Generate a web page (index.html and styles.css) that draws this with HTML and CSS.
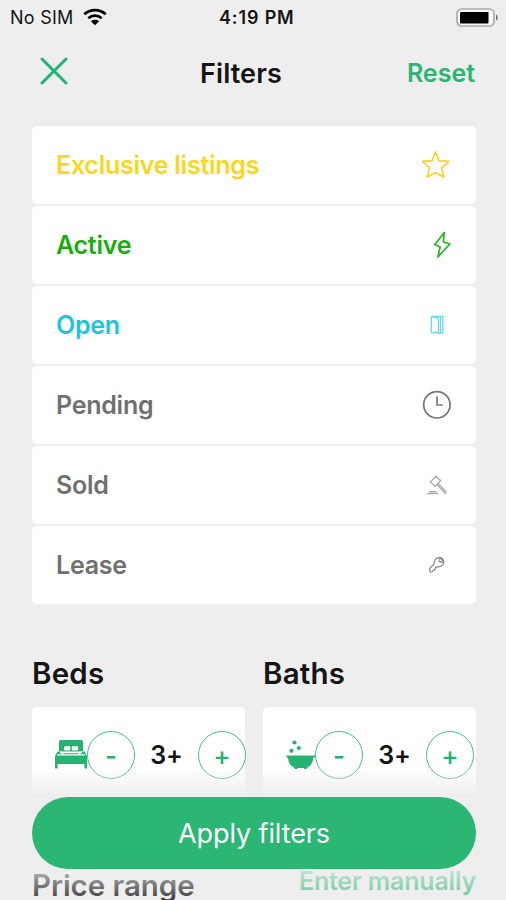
FILE: index.html
```html
<!DOCTYPE html>
<html lang="en">
<head>
<meta charset="utf-8">
<title>Filters</title>
<link rel="stylesheet" href="styles.css">
</head>
<body>
<div class="screen">
  <div class="status">
    <div class="carrier"><span class="sim">No SIM</span>
      <svg width="24" height="18" viewBox="0 0 24 18" fill="none" stroke="#000" stroke-width="2.7"><path d="M1.3 6.3C7.2.6 16.8.6 22.7 6.3M5.3 10.3c3.8-3.5 9.600-3.500 13.400 0"/><path d="M12 17.200 7.900 13.300c2.300-2 5.900-2 8.200 0z" fill="#000" stroke="none"/></svg>
    </div>
    <span class="time">4:19 PM</span>
    <svg class="battery" width="43" height="19" viewBox="0 0 43 19"><rect x="1" y="1" width="37" height="17" rx="4.500" fill="#f8f8f8" stroke="#aaa" stroke-width="1.700"/><rect x="4" y="4" width="28.500" height="11.500" rx="1"/><path d="M40 6.500c2.400 1 2.400 5 0 6z" fill="#777"/></svg>
  </div>
  <header class="header">
    <svg class="close" width="28" height="28" viewBox="0 0 28 28" fill="none" stroke="#1db374" stroke-width="3" stroke-linecap="round"><path d="m2 2 24 24M26 2 2 26"/></svg>
    <h1 class="title"><span>Filters</span></h1>
    <span class="reset">Reset</span>
  </header>
  <main class="content">
    <div class="list">
      <div class="row exclusive"><span class="t-exclusive">Exclusive listings</span>
        <svg width="30" height="30" viewBox="0 0 30 30"><path d="m14.500 2 3.600 8.700 9.900.7-7.400 6.500 2.200 9.400-8.300-4.900-8.400 4.900 2.300-9.400L1.500 11.400l9.500-.7z"/></svg></div>
      <div class="row active"><span class="t-active">Active</span>
        <svg width="30" height="30" viewBox="0 0 30 30"><path d="M23.200 2.500 13.800 14.600l5.300 2.500-2.200 9.900L28.800 14l-6.400-2z"/></svg></div>
      <div class="row open"><span class="t-open">Open</span>
        <svg width="30" height="30" viewBox="0 0 30 30"><path d="M10.300 6.500h11.500v16.200M10.300 6.500v16h7.200M10.300 6.500l7.200 2.200v14.800l4.500-1M19.500 7v16"/></svg></div>
      <div class="row"><span class="t-pending">Pending</span>
        <svg width="30" height="30" viewBox="0 0 30 30"><circle cx="15.900" cy="14.800" r="13.200"/><path d="M16 6.500v8.500h5.800"/></svg></div>
      <div class="row sold"><span class="t-sold">Sold</span>
        <svg width="30" height="30" viewBox="0 0 30 30"><path d="m15 6.200-5.500 5.700 4.500 4.300 5.600-5.700zM14 5.500l6.300 5.900M8.800 11.200l6 5.700M17.400 13.800l8.200 8.500M16.200 15l8.200 8.500 1.200-1.200M6.500 23.500h11M8.200 21.700h7.200"/></svg></div>
      <div class="row lease"><span class="t-lease">Lease</span>
        <svg width="30" height="30" viewBox="0 0 30 30"><path d="M14 9.800c1.600-2.400 4.700-2.900 6.800-1.600 2.100 1.400 2.600 4.200 1.200 6.300-1.200 1.800-3.200 2.500-5.100 2.200l-2.300 1-.5 1.900-1.900.5c-.3 1.500-1.400 2.300-2.600 1.800-1.200-.6-1.300-2.800-.4-3.900l4-4.200c-.2-1.400 0-2.800.8-4zM17.800 8.300l.5 3.200 3.800.8M19.200 8.200l3.100 2.800"/></svg></div>
    </div>
    <div class="counters">
      <section class="group">
        <h2 class="t-beds"><span>Beds</span></h2>
        <div class="card">
          <svg class="bed" width="32" height="30" viewBox="0 0 32 30" fill="#26b371"><path d="M5.500 0h21Q28 0 28 1.500V11.500H4V1.500Q4 0 5.500 0z"/><path d="M2.500 11.500h3L7.500 13.300h17l2-1.800h3L32 16v12.500h-2.600V24H2.600v4.500H0V16z"/><path d="M2.200 14.900h27.600M5 11.500l3.200 2.800M27 11.500l-3.200 2.800" stroke="#fff" stroke-width="1.400"/><rect x="9" y="6.300" width="6.300" height="4.300" rx="1" fill="#fff"/><rect x="16.800" y="6.300" width="6.300" height="4.300" rx="1" fill="#fff"/></svg>
          <button class="step">-</button><span class="value">3+</span><button class="step">+</button>
        </div>
      </section>
      <section class="group">
        <h2 class="t-baths"><span>Baths</span></h2>
        <div class="card baths">
          <svg class="bath" width="29" height="30" viewBox="0 0 29 30" fill="#26b371"><circle cx="8.500" cy="2.500" r="2.100"/><circle cx="12.800" cy="8" r="2.100"/><circle cx="5.500" cy="10.800" r="2.100"/><path d="M.5 15.500H29v2h-1.500c-.7 5-2.600 8.500-5.500 9.500l-1.500 2h-2l-1-1h-5.500l-1 1H9l-1.500-2c-3.500-1-5-4.500-5.500-9.500H.5z"/></svg>
          <button class="step">-</button><span class="value">3+</span><button class="step">+</button>
        </div>
      </section>
    </div>
    <div class="price"><h2 class="t-price"><span>Price range</span></h2><span class="manual">Enter manually</span></div>
  </main>
  <div class="footer"><button class="apply"><span>Apply filters</span></button></div>
</div>
</body>
</html>
```
FILE: styles.css
```css
* { box-sizing: border-box; }
body { margin: 0; background: #eee; font-family: Inter, "Liberation Sans", sans-serif; font-feature-settings: "calt" 0; color: #151515; }
h1, h2 { margin: 0; }
button { font-family: inherit; font-feature-settings: inherit; padding: 0; }
.screen { position: relative; width: 506px; height: 900px; overflow: hidden; }
.status { display: grid; grid-template-columns: 209px auto 1fr; align-items: center; height: 34px; padding: 0 7px 0 10px; font-size: 18px; }
.carrier { display: flex; align-items: center; gap: 9px; }
.sim { letter-spacing: .25px; }
.time { font-weight: 600; letter-spacing: .85px; }
.battery { justify-self: end; }
.header { display: grid; grid-template-columns: 160px auto 1fr; align-items: center; height: 78px; padding: 0 31px 0 40px; }
.close { margin-top: -4px; }
.title { padding-top: 2px; font-size: 27px; font-weight: 600; line-height: 40px; letter-spacing: .1px; }
.reset { justify-self: end; font-size: 25px; font-weight: 600; color: #2bb673; }
.content { padding: 14px 30px 0 32px; }
.list { display: flex; flex-direction: column; gap: 2px; }
.row { display: flex; align-items: center; justify-content: space-between; height: 78px; padding: 0 25px 0 24px; background: #fff; border-radius: 5px; font-size: 25px; font-weight: 600; letter-spacing: -.25px; color: #707070; }
.row svg { fill: none; stroke: #777; stroke-width: 1.7; stroke-linejoin: round; }
.exclusive { color: #f9d71c; }
.exclusive svg { stroke: #f5d52b; }
.active { color: #17ad0c; }
.active svg { stroke: #27b427; }
.open { color: #1bc5df; }
.open svg { stroke: #68d7e8; stroke-width: 1.3; }
.sold svg { stroke: #aaa; stroke-width: 1.3; }
.lease svg { stroke: #8c8c8c; stroke-width: 1.3; }
.counters { display: grid; grid-template-columns: 213px 213px; gap: 18px; margin-top: 49px; }
.group h2, .price h2 { font-size: 29.500px; font-weight: 600; line-height: 40px; letter-spacing: .2px; }
.price h2 { letter-spacing: -.05px; }
.card { display: flex; align-items: center; height: 95px; margin-top: 14px; padding-left: 23px; background: #fff; border-radius: 5px; }
.card svg { flex: none; }
.step { flex: none; width: 48px; height: 48px; border: 1.5px solid #4abc8b; border-radius: 50%; background: transparent; color: #26b371; font-size: 26px; font-weight: 500; line-height: 48px; }
.value { flex: none; width: 63px; text-align: center; font-size: 25px; font-weight: 600; }
.price { display: flex; justify-content: space-between; align-items: flex-start; height: 40px; margin-top: 63px; }
.manual { font-size: 25px; font-weight: 600; line-height: 33px; letter-spacing: -.2px; color: #2bb673; opacity: .85; }
.footer { position: absolute; left: 0; right: 0; bottom: 0; height: 136px; padding: 33px 30px 0 32px; background: linear-gradient(#eee0 4px, #eee 32px, #eee 92px, #eeeeee30 100%); }
.apply { display: block; width: 444px; height: 72px; border: 0; border-radius: 36px; background: #2bb673; color: #fff; font-size: 27px; letter-spacing: -.1px; }
```
